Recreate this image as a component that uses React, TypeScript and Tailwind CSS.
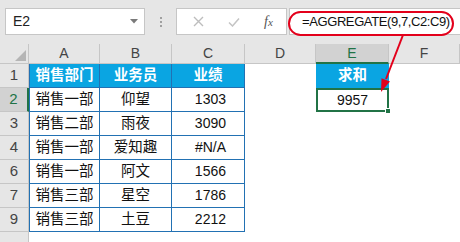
import React from 'react';

type Row = { n: string; a: string; b: string; c: string; e?: string };

const rows: Row[] = [
  { n: '1', a: '销售部门', b: '业务员', c: '业绩', e: '求和' },
  { n: '2', a: '销售一部', b: '仰望', c: '1303', e: '9957' },
  { n: '3', a: '销售二部', b: '雨夜', c: '3090' },
  { n: '4', a: '销售一部', b: '爱知趣', c: '#N/A' },
  { n: '6', a: '销售一部', b: '阿文', c: '1566' },
  { n: '7', a: '销售三部', b: '星空', c: '1786' },
  { n: '9', a: '销售三部', b: '土豆', c: '2212' },
];

const colLetters = ['A', 'B', 'C', 'D', 'E', 'F'];

function FormulaBar() {
  return (
    <div className="h-[44px] bg-[#e6e6e6] flex items-start pt-[8px] pl-[5px]">
      {/* name box */}
      <div className="w-[140px] h-[27px] bg-white border border-[#c6c6c6] flex items-center pl-[7px] pr-[6px]">
        <span className="flex-1 text-[14px] text-[#222]">E2</span>
        <svg width="8" height="5" viewBox="0 0 8 5">
          <polygon points="0,0 8,0 4,4.5" fill="#7a7a7a" />
        </svg>
      </div>
      {/* grip dots */}
      <div className="w-[31px] h-[27px] flex flex-col items-center justify-center gap-[2px]">
        <div className="w-[2px] h-[2px] bg-[#a0a0a0]" />
        <div className="w-[2px] h-[2px] bg-[#a0a0a0]" />
        <div className="w-[2px] h-[2px] bg-[#a0a0a0]" />
      </div>
      {/* cancel / enter / fx */}
      <div className="w-[111px] h-[27px] bg-white border border-[#c6c6c6] flex items-center">
        <div className="w-[40px] flex justify-center pl-[2px]">
          <svg width="11" height="11" viewBox="0 0 11 11">
            <path d="M1 1 L10 10 M10 1 L1 10" stroke="#bdbdbd" strokeWidth="1.4" fill="none" />
          </svg>
        </div>
        <div className="w-[34px] flex justify-center">
          <svg width="12" height="10" viewBox="0 0 12 10">
            <path d="M1 5.5 L4.5 9 L11 1.5" stroke="#c4c4c4" strokeWidth="1.5" fill="none" />
          </svg>
        </div>
        <div className="w-[35px] flex justify-center">
          <span className="text-[14px] text-[#555] italic" style={{ fontFamily: '"Liberation Serif", serif' }}>
            f<span className="text-[11px]">x</span>
          </span>
        </div>
      </div>
      {/* formula input */}
      <div className="ml-[2px] flex-1 h-[27px] bg-white border border-[#c6c6c6] border-r-0 flex items-center pl-[12px]">
        <span className="text-[13px] tracking-[-0.4px] text-[#111]">=AGGREGATE(9,7,C2:C9)</span>
      </div>
    </div>
  );
}

function ColumnHeaders() {
  return (
    <>
      <div className="h-[20px] bg-[#e6e6e6] border-r border-b border-[#c6c6c6] relative">
        <svg className="absolute left-[15px] top-[6px]" width="11" height="11" viewBox="0 0 11 11">
          <polygon points="11,0 11,11 0,11" fill="#b5b5b5" />
        </svg>
      </div>
      {colLetters.map((l) =>
        l === 'E' ? (
          <div
            key={l}
            className="h-[20px] bg-[#d2d2d2] border-r border-[#c6c6c6] border-b-2 border-b-[#217346] flex items-center justify-center text-[14px] text-[#217346]"
          >
            {l}
          </div>
        ) : (
          <div
            key={l}
            className="h-[20px] bg-[#e6e6e6] border-r border-b border-[#c6c6c6] flex items-center justify-center text-[14px] text-[#444]"
          >
            {l}
          </div>
        )
      )}
    </>
  );
}

function DataRow({ row, index }: { row: Row; index: number }) {
  const head = index === 0;
  const selected = row.n === '2';
  const cjk = 'text-[14.5px]';
  return (
    <>
      {selected ? (
        <div className="h-[24px] bg-[#d2d2d2] border-b border-[#c6c6c6] border-r-2 border-r-[#217346] flex items-end justify-center pb-[1px] text-[15px] text-[#217346]">
          {row.n}
        </div>
      ) : (
        <div className="h-[24px] bg-[#e6e6e6] border-r border-b border-[#c6c6c6] flex items-end justify-center pb-[1px] text-[15px] text-[#444]">
          {row.n}
        </div>
      )}
      {head ? (
        <>
          <div className={`h-[24px] bg-[#0aa5e2] border-l border-r border-b border-[#2271b3] flex items-center justify-center text-white font-bold ${cjk}`}>
            {row.a}
          </div>
          <div className={`h-[24px] bg-[#0aa5e2] border-r border-b border-[#2271b3] flex items-center justify-center text-white font-bold ${cjk}`}>
            {row.b}
          </div>
          <div className={`h-[24px] bg-[#0aa5e2] border-r border-b border-[#2271b3] flex items-center justify-center text-white font-bold ${cjk}`}>
            {row.c}
          </div>
        </>
      ) : (
        <>
          <div className={`h-[24px] bg-white border-l border-r border-b border-[#2271b3] flex items-center justify-center text-[#111] ${cjk}`}>
            {row.a}
          </div>
          <div className={`h-[24px] bg-white border-r border-b border-[#2271b3] flex items-center justify-center text-[#111] ${cjk}`}>
            {row.b}
          </div>
          <div className="h-[24px] bg-white border-r border-b border-[#2271b3] flex items-center justify-end pr-[18px] text-[14px] text-[#111]">
            {row.c}
          </div>
        </>
      )}
      <div className="h-[24px] bg-white" />
      {head ? (
        <div className={`h-[24px] bg-[#0aa5e2] flex items-center justify-center text-white font-bold ${cjk}`}>
          {row.e}
        </div>
      ) : selected ? (
        <div className="h-[24px] bg-white border-2 border-[#217346] relative flex items-center justify-center text-[14px] text-[#111]">
          {row.e}
          <div className="absolute right-[-4px] bottom-[-4px] w-[6px] h-[6px] bg-[#217346] border border-white" />
        </div>
      ) : (
        <div className="h-[24px] bg-white" />
      )}
      <div className="h-[24px] bg-white" />
    </>
  );
}

export default function App() {
  return (
    <div
      className="relative w-[460px] h-[242px] overflow-hidden bg-white"
      style={{ fontFamily: '"Liberation Sans", "Noto Sans CJK SC", sans-serif' }}
    >
      <FormulaBar />
      <div className="grid grid-cols-[29px_71px_72px_73px_71px_73px_1fr]">
        <ColumnHeaders />
        {rows.map((r, i) => (
          <DataRow key={r.n} row={r} index={i} />
        ))}
        <div className="h-[24px] bg-[#e6e6e6] border-r border-[#c6c6c6]" />
        <div className="h-[24px] col-span-6 bg-white" />
      </div>
      {/* callout: outline around the formula and arrow to the result cell */}
      <svg className="absolute inset-0 pointer-events-none" width="460" height="242" viewBox="0 0 460 242">
        <rect x="289" y="12" width="164" height="23" rx="11.5" ry="11.5" fill="none" stroke="#e3001b" strokeWidth="2" />
        <line x1="403" y1="35" x2="386" y2="79" stroke="#e3001b" strokeWidth="2" />
        <polygon points="381,92 390,81.5 381.5,78.3" fill="#e3001b" />
      </svg>
    </div>
  );
}
